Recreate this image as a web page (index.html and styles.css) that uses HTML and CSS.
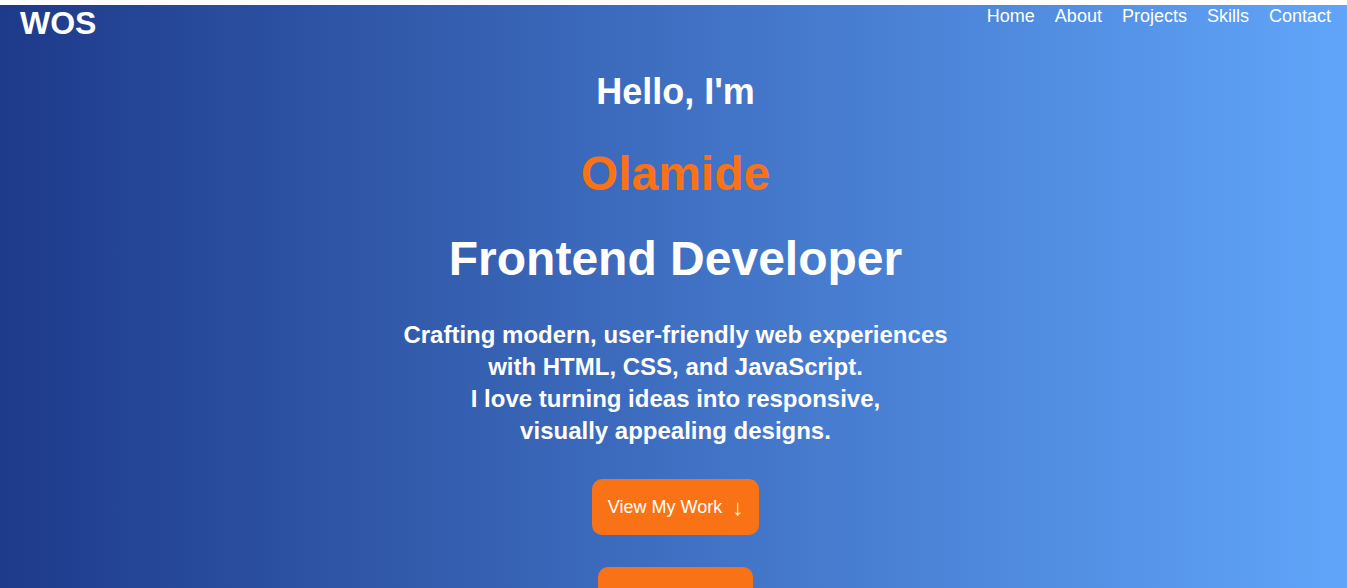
FILE: index.html
```html
<!DOCTYPE html>
<html lang="en">
<head>
<meta charset="utf-8">
<title>WOS</title>
<link rel="stylesheet" href="styles.css">
</head>
<body>
<div class="page">
  <section class="hero">
    <header class="topbar">
      <div class="logo">WOS</div>
      <nav class="nav">
        <a href="#home">Home</a>
        <a href="#about">About</a>
        <a href="#projects">Projects</a>
        <a href="#skills">Skills</a>
        <a href="#contact">Contact</a>
      </nav>
    </header>
    <div class="intro">
      <h2 class="hello">Hello, I'm</h2>
      <h1 class="name">Olamide</h1>
      <h2 class="role">Frontend Developer</h2>
      <p class="tagline">Crafting modern, user-friendly web experiences<br>with HTML, CSS, and JavaScript.<br>I love turning ideas into responsive,<br>visually appealing designs.</p>
      <a class="btn btn-work" href="#projects">View My Work <span class="arrow">↓</span></a>
      <a class="btn btn-cv" href="#cv">Download CV</a>
    </div>
  </section>
</div>
</body>
</html>
```
FILE: styles.css
```css
html, body {
  margin: 0;
  padding: 0;
  background: #ffffff;
  font-family: "Liberation Sans", Arial, sans-serif;
}

.page {
  padding-top: 5px;
}

.hero {
  min-height: 700px;
  background: linear-gradient(to right, #1e3a8a, #60a5fa);
  color: #ffffff;
}

.topbar {
  display: flex;
  justify-content: space-between;
  align-items: flex-start;
  padding: 0 16px 0 20px;
}

.logo {
  font-size: 32px;
  font-weight: bold;
  line-height: 1.15;
}

.nav {
  display: flex;
  gap: 20px;
  padding-top: 1px;
}

.nav a {
  color: #ffffff;
  text-decoration: none;
  font-size: 18px;
  line-height: 1.15;
}

.intro {
  display: flex;
  flex-direction: column;
  align-items: center;
  text-align: center;
  padding-left: 4px;
}

.hello {
  margin: 29px 0 0;
  font-size: 36px;
  font-weight: bold;
  line-height: 1.15;
}

.name {
  margin: 34px 0 0;
  font-size: 48px;
  font-weight: bold;
  line-height: 1.15;
  color: #f97316;
}

.role {
  margin: 30px 0 0;
  font-size: 48px;
  font-weight: bold;
  line-height: 1.15;
}

.tagline {
  margin: 32px 0 0;
  font-size: 24px;
  font-weight: bold;
  line-height: 32px;
}

.btn {
  display: flex;
  align-items: center;
  justify-content: center;
  gap: 10px;
  background: #f97316;
  color: #ffffff;
  text-decoration: none;
  font-size: 18px;
  border-radius: 10px;
  box-sizing: border-box;
  height: 56px;
  padding-top: 2px;
}

.btn-work {
  margin-top: 32px;
  width: 167px;
}

.btn-cv {
  margin-top: 32px;
  width: 155px;
}

.arrow {
  font-size: 22px;
  color: #fef3c7;
}
```
